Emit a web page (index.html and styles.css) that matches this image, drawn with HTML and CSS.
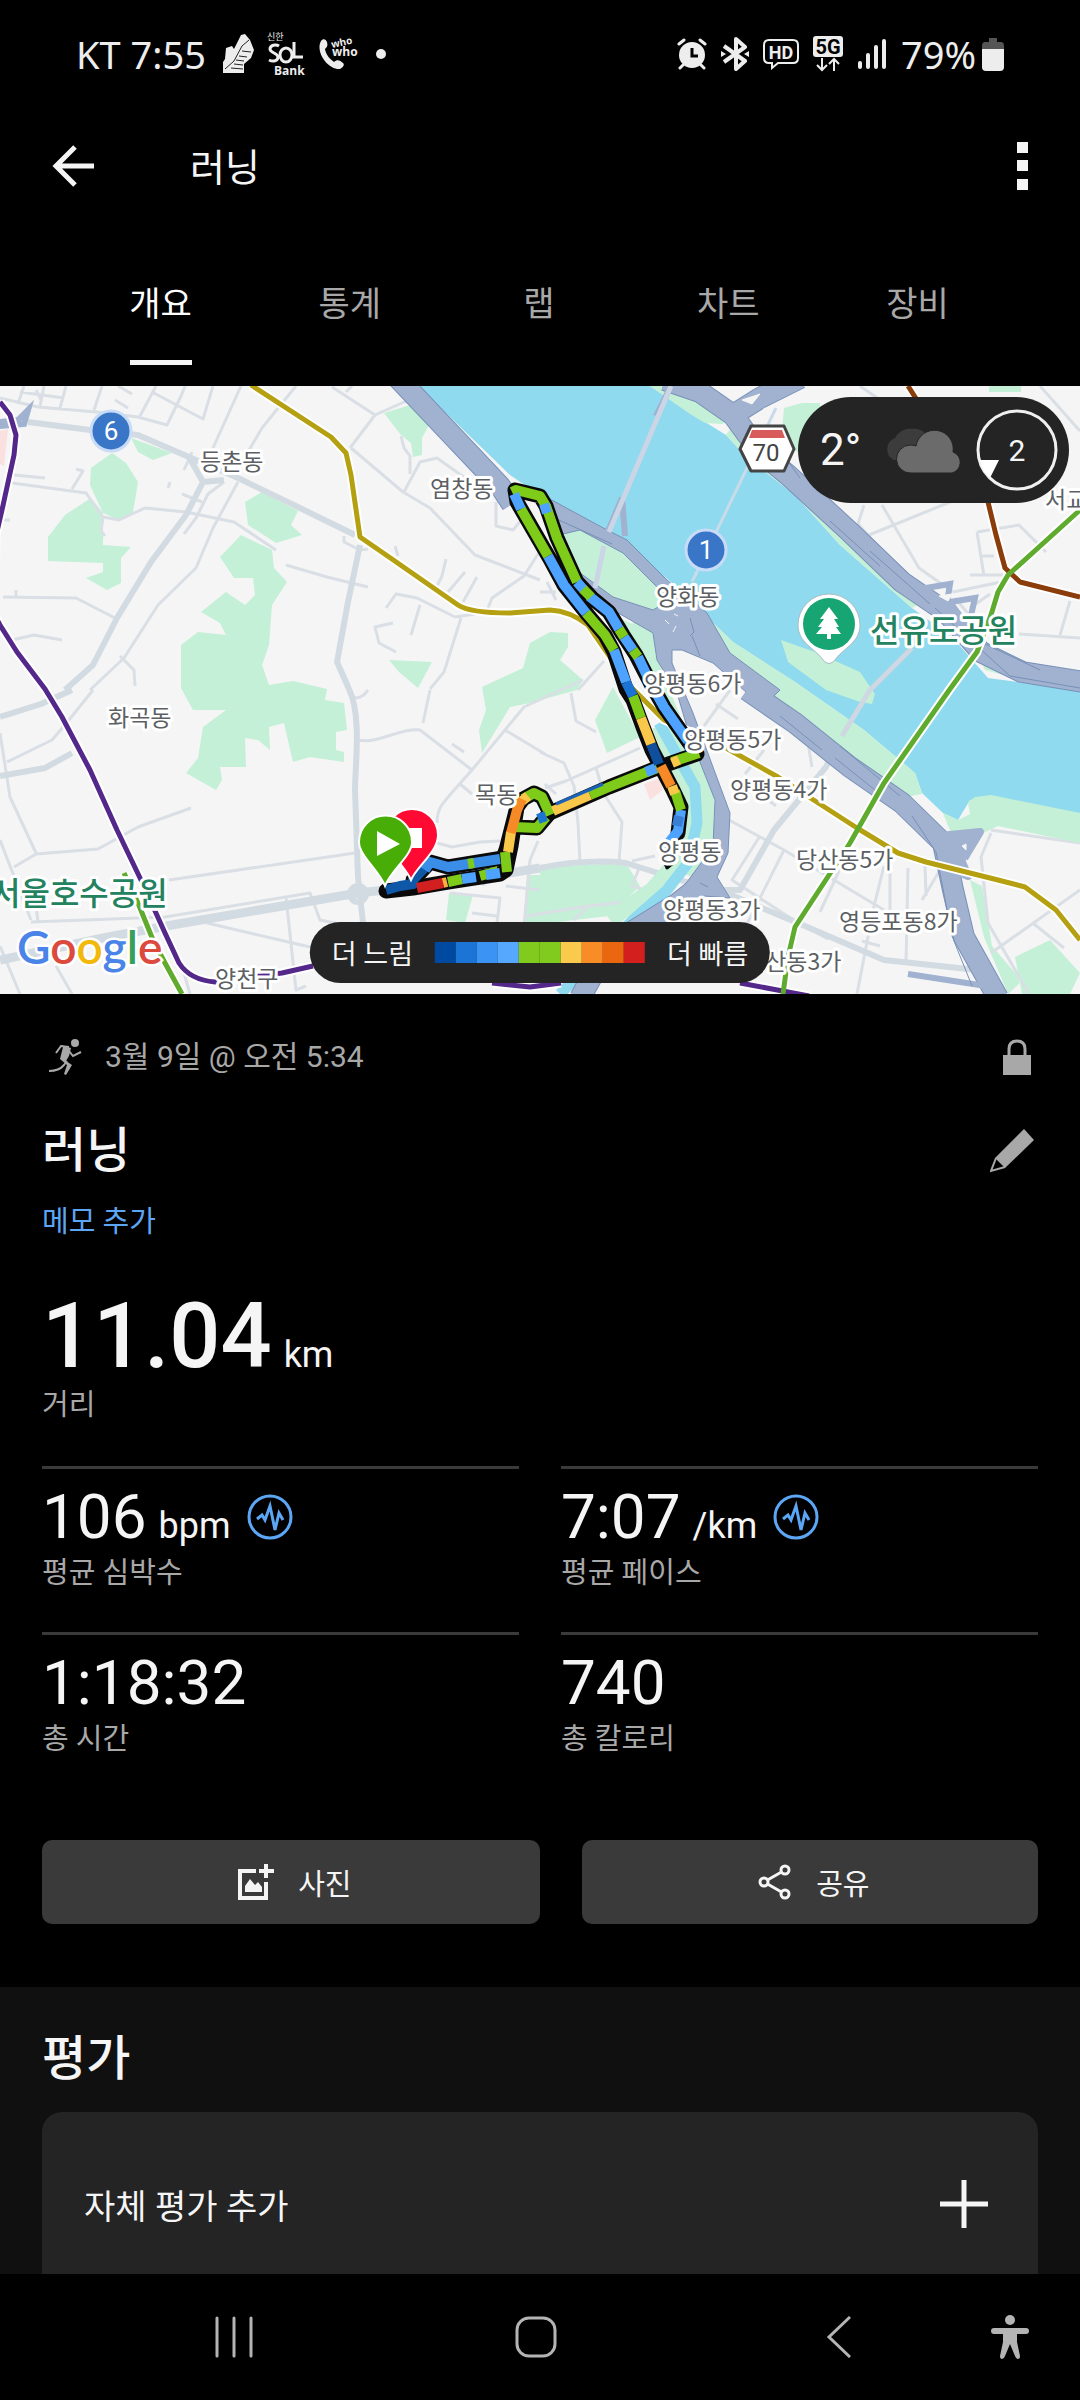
FILE: index.html
```html
<!DOCTYPE html>
<html lang="ko">
<head>
    <meta charset="UTF-8">
    <meta name="viewport" content="width=device-width, initial-scale=1.0">
    <title>러닝</title>
    <link rel="stylesheet" href="styles.css">
</head>
<body>

<!-- Status bar -->
<div class="status-bar">
    <div class="status-left">
        <span class="status-text">KT 7:55</span>
        <svg width="32" height="42" viewBox="0 0 32 42"><path d="M1 40V29l2-3 1-11 6-2 2 3 7-14 4-1 5 6 4 10-3 8-7 6v9z" fill="#ededed"/><path d="M3 36l9-8 8-15 7-6M17 23l8 1M14 27l8 1M12 31l9 1M9 35l12 1M20 18l9 1" stroke="#222" stroke-width="1" fill="none"/></svg>
        <svg width="40" height="50" viewBox="0 0 40 50">
            <text x="1" y="11" class="ico-kr">신한</text>
            <path d="M13 17c-3-2-9-1-9 3s8 4 8 8-5 5-9 3M28 13v15h9" stroke="#ededed" stroke-width="3" fill="none"/>
            <ellipse cx="20" cy="26" rx="6" ry="7" stroke="#ededed" stroke-width="3" fill="none"/>
            <text x="8" y="46" class="ico-bank">Bank</text>
        </svg>
        <svg width="42" height="44" viewBox="0 0 42 44">
            <path d="M3 9c2-3 5-2 6 1 1 4 0 5-2 7 1 6 5 10 9 13 3-3 6-2 9 1 2 2 0 4-3 6C10 38-3 20 3 9z" fill="#ededed"/>
            <text x="14" y="16" class="ico-who" transform="rotate(-12 14 16)">who</text>
            <text x="14" y="24" class="ico-who big">who</text>
        </svg>
        <span class="dot"></span>
    </div>
    <div class="status-right">
        <svg width="30" height="32" viewBox="0 0 30 32"><circle cx="15" cy="17" r="13" fill="#ededed"/><path d="M2 6l5-4M28 6l-5-4M6 27l-3 3M24 27l3 3" stroke="#ededed" stroke-width="3" stroke-linecap="round"/><path d="M15 10v8h6" stroke="#000" stroke-width="3" fill="none"/></svg>
        <svg width="28" height="34" viewBox="0 0 28 34"><path d="M3 9l21 15-9 8V2l9 8L3 25" stroke="#ededed" stroke-width="4" stroke-linejoin="round" fill="none"/><path d="M0 14l5 3-5 3zM28 14l-5 3 5 3z" fill="#ededed"/></svg>
        <svg width="36" height="32" viewBox="0 0 36 32"><path d="M6 2h24q5 0 5 5v13q0 5-5 5H15l-6 5v-5H6q-5 0-5-5V7q0-5 5-5z" stroke="#ededed" stroke-width="2" fill="none"/><text x="18" y="21" class="ico-hd">HD</text></svg>
        <svg width="30" height="36" viewBox="0 0 30 36"><rect width="30" height="21" rx="3" fill="#ededed"/><text x="15" y="18" class="ico-5g">5G</text><path d="M9 22v12M4 29l5 5 5-5M21 35V23M16 28l5-5 5 5" stroke="#ededed" stroke-width="2" fill="none"/></svg>
        <svg width="30" height="32" viewBox="0 0 30 32"><path d="M3 25v4M11 17v12M19 9v20M27 3v26" stroke="#ededed" stroke-width="4" stroke-linecap="round"/></svg>
        <span class="status-text">79%</span>
        <svg width="22" height="33" viewBox="0 0 22 33"><path d="M7 0h8v4h4q3 0 3 4v4H0V8q0-4 3-4h4z" fill="#555"/><path d="M0 11h22v18q0 4-4 4H4q-4 0-4-4z" fill="#ededed"/></svg>
    </div>
</div>

<!-- App bar -->
<header class="app-bar">
    <button class="icon-btn" aria-label="뒤로">
        <svg width="42" height="42" viewBox="0 0 42 42"><path d="M42 21H4M23 2L4 21l19 19" stroke="#f5f5f5" stroke-width="5" fill="none"/></svg>
    </button>
    <h1>러닝</h1>
    <button class="icon-btn menu" aria-label="더보기">
        <svg width="11" height="48" viewBox="0 0 11 48"><path d="M0 0h11v11H0zM0 18h11v11H0zM0 37h11v11H0z" fill="#f5f5f5"/></svg>
    </button>
</header>

<nav class="tabs">
    <a href="#" class="tab active">개요</a>
    <a href="#" class="tab">통계</a>
    <a href="#" class="tab">랩</a>
    <a href="#" class="tab">차트</a>
    <a href="#" class="tab">장비</a>
</nav>

<main class="content">

    <!-- Route map -->
    <section class="map">
        <svg class="map-svg" viewBox="0 0 1080 608">
            <rect width="1080" height="608" fill="#f5f5f5"/>

            <!-- Parks -->
            <g class="park">
                <path d="M112 67L91 82 90 99 103 127 119 134 133 126 138 96 126 77z"/>
                <path d="M91 112L65 129 48 151V175L103 177V186L86 192 107 204 121 197V172L131 161 103 159V127z"/>
                <path d="M131 52L172 67 153 74 138 66z"/>
                <path d="M262 106L298 125 291 139 302 149 276 157 248 139 245 116z"/>
                <path d="M241 149L272 164 274 182 287 196 272 219 269 259 262 279 269 299 293 295 327 303 325 314 344 317 347 344 336 346 336 364 344 366V376L310 371 293 376 284 337 269 341 270 364 258 354 245 352 246 381 220 381 222 394 216 404 186 387 198 372 203 341 226 324 193 324 181 302V259L198 246 226 249 220 237 201 226 226 206 245 219 255 209 253 192 234 192 220 171z"/>
                <path d="M389 274L432 276 418 302 399 286zM384 27L417 17 430 37 422 52 422 69 413 71 411 57 401 49z"/>
                <path d="M530 257L550 246 568 247V261L560 274 583 294 577 304 530 317 510 321 482 367 479 344 486 324 482 301 523 282z"/>
                <path d="M449 507L473 509 465 537 446 534zM527 489H550V545H523z"/>
                <path d="M613 301L595 334 607 367 640 351z"/>
                <path d="M540 481L626 477 640 500 609 530 540 538z"/>
                <path d="M802 17L784 22 781 56 820 80V17z"/>
                <path d="M970 494L984 551 1008 608 1022 595 992 560 982 500zM1015 571L1050 554 1080 587 1070 608 1022 608zM989 0h32v6h-32z"/>
            </g>
            <path d="M644 398L661 392 663 404 650 414zM0 45L8 43 4 80 0 78z" fill="#fbe0e0"/>

            <!-- Local roads -->
            <g class="road">
                <path d="M0 12L38 21 96 26 138 31 167 39 181 10 186-2M18 18L24 0M40 20L44 0M60 22L66 0M94 24L102 0M20 6L64 12M140 30L156 0M152 6L203 33 213 0M115 14L128 22M118 0L132 8M36 4L42 16"/>
                <path d="M241 0L213 62M296 0L262 42 248 66M238 96L213 142 196 182 158 219 124 272 90 304M12 97L86 107 103 131 119 134 145 122 186 126 234 136 276 164M103 131L101 145 105 150"/>
                <path d="M3 211L76 212 115 232M16 204V212M3 134H10M12 254L34 249 62 254M14 89L45 92M76 83L83 85 72 103M182 108L202 116M170 96L168 102M224 96L208 108 196 132 184 148M120 270L134 284 135 300M184 84L192 66"/>
                <path d="M351 62L403 106 430 122 475 169 540 194M332 1L375 29 413 12M346 6L352 0M375 29L350 62M286 179L327 191 368 201M386 222L396 208 417 212 455 231 475 228M461 232L444 286 430 303M420 219L411 249M465 186L448 206M477 191L463 216M446 173L442 190 437 200M393 237L375 241 379 257 396 266M496 116L496 140 513 144 523 132M404 106L420 76 437 72 489 109M401 50L404 62 410 70 410 88M344 150V156L360 164 368 163M395 160L398 170M540 165L524 190 492 212 488 222"/>
                <path d="M93 304L69 334 52 354 7 376M0 347L10 411 36 467M14 481L36 468 98 463 138 441 191 422M0 454L31 534M31 536L165 531 310 507 320 534 344 539M36 520L38 536M169 494L355 467M207 537L310 561M286 511L296 604 306 600M0 560L20 608M56 580L72 608M182 580L190 608"/>
                <path d="M358 354C380 358 398 342 420 344L472 384M583 294L524 321 505 344 472 384C440 420 437 421 437 437M423 337L430 304M354 312C364 312 366 306 368 304M452 358L464 366M460 398L472 408M505 344L545 368M437 457L452 461 480 456 500 455M506 500L540 504M450 507L500 512 497 537M472 527L497 530M458 540L456 585M480 470L484 500"/>
                <path d="M540 366L564 377 574 400 578 437 580 476M545 402L566 395 640 362M571 307L576 335 596 346M596 382L604 408 622 436 619 476M545 398L556 408M632 475L655 470M640 480L632 500 650 506M530 474L524 540M526 530L588 520 626 516M574 534L588 520M538 455L530 474"/>
                <path d="M729 434L784 464 884 524M760 450L732 494 798 537 828 553M784 464L740 552M716 318L738 333M704 340L730 304M745 388L764 364M812 381L806 345M768 414L776 420M884 480L874 520 857 608M908 482L906 576M890 478V540M925 480L926 510M940 484L922 514M846 470L820 526M1080 504L991 567M991 447L981 471 988 537 1029 608M991 444L1080 457M1034 538L1064 562M862 555L880 560"/>
                <path d="M864 119L858 138 909 195M869 149L960 112M882 119L919 182 953 206M977 146L1019 139 1046 166M977 146L984 190M970 189H1004M980 170H994M953 206L1001 196M1070 215L1060 249M1019 248L1080 252M955 212L975 236M860 0L880 14M1040 0L1080 45M970 222L990 208M547 196L556 214M540 206H556M578 304L604 275"/>
            </g>
            <g class="road main">
                <path d="M28 36L90 44 138 49 189 71 238 92 300 122 355 149M203 96L186 129 151 176 117 232 93 279 65 304M189 71L203 96 224 94M360 159L348 216 337 276 349 303C362 330 355 380 355 404L358 491 363 537M0 331L41 318 72 304M0 390L45 382 72 367"/>
                <path class="wide" d="M0 574L103 552 172 539 358 507 448 497 540 482"/>
                <path d="M540 482C570 476 600 474 626 477L712 504H740L774 444 826 381 864 304M712 501L798 537 884 574 977 584"/>
                <circle cx="358" cy="508" r="8"/>
            </g>

            <!-- River -->
            <path class="water" d="M418 0L510 89 554 119 605 146 626 159 671 196 705 229 733 256 795 296 864 344 915 387 922 407 943 427 958 434 970 414 988 421 1080 427V304L988 292 953 252 912 222 840 159 795 109 747 72 726 49 705 36 678 19 650 0z"/>
            <path class="stream-bank" d="M640 235L655 290 680 350 706 401 706 447 690 490"/>
            <path class="stream-bank" d="M660 340L682 401 684 437 676 477 652 504 610 534"/>
            <path class="stream" d="M659 337L678 371 695 401 697 437 688 477 667 504 633 534 560 608"/>
            <g class="park">
                <path d="M650 0H680L735 32 722 38 705 37 690 28zM610 228L653 247 656 275 640 285z"/>
                <path d="M781 254L815 266 860 286 875 308 872 318 860 316 826 304 788 276z"/>
                <path d="M705 229L733 256 795 296 864 344 915 387 922 408 900 412 840 372 770 330 720 270z"/>
                <path d="M726 49L747 72 795 109 840 159 912 222 925 215 850 140 765 60 735 36z"/>
                <path d="M943 427L958 434 970 428 968 416 975 411 991 409 1080 427V457L998 440 977 450 953 452z"/>
                <path d="M975 262L1005 284 1000 288 985 284z"/>
            </g>

            <!-- Expressways -->
            <g class="expressway-edge">
                <path d="M396-10L500 100 512 118M747 304L795 337 850 381 902 417 943 457 953 504 964 551 998 612"/>
                <path d="M700 500L678 517 609 560 580 612"/>
                <path d="M665-6L700 6 733 29 760 66 788 89 850 146 902 196 946 226 981 266 1022 286 1084 296M733 29L760 12 800-8"/>
            </g>
            <path class="junction" d="M548 112L607 144 627 154 667 194 707 227 730 267 780 304 763 321 713 277 682 264 672 264 672 277 693 327 730 427 728 467 717 491 730 512 678 508 713 461 715 414 690 351 677 307 657 274 653 247 613 224 560 170z"/>
            <g class="expressway">
                <path d="M396-10L500 100 512 118M747 304L795 337 850 381 902 417 943 457 953 504 964 551 998 612"/>
                <path d="M700 500L678 517 609 560 580 612"/>
                <path d="M665-6L700 6 733 29 760 66 788 89 850 146 902 196 946 226 981 266 1022 286 1084 296M733 29L760 12 800-8"/>
                <path d="M940 450L980 446 962 476 968 490 945 480z"/>
            </g>
            <path d="M563 148L580 144 623 167 657 201 670 214 653 224 613 211 598 200 580 187z" fill="#c3f0d6" stroke="#7890b8"/>
            <path class="expressway-thin" d="M0 36L18 34 28 24 24 38 0 40zM606 150L622 112 625 150M920 203L950 198 946 222M908 588L986 600M656 30L671 0M960 230L950 216 975 212 970 234"/>
            <path class="expressway-gap" d="M939 210L952 208 948 215zM742 14L760 8 752 18zM764 22l4 2-3 4zM763 30v6M773 30v6M674 228l4 2M665 234l4 4M676 240l-3 6M962 460l4-2v6zM966 474l5 2-3 2z"/>
            <path class="expressway-line" d="M550 130L612 158M690 232L694 246 690 250M700 270L692 250M780 330L822 364M835 372L880 408M840 360L900 410M912 430L936 466 952 550 972 600M870 165L930 218M830 135L880 180M935 222L1010 290 1080 302M770 50L800 92M985 258L1040 284M700 497l8 4"/>

            <!-- Bridges -->
            <path d="M671 0L609 146M604 160L595 202" stroke="#cbd5e6" stroke-width="5" fill="none"/>
            <path d="M776 22L692 196" stroke="#c9dbe8" stroke-width="3" fill="none"/>
            <path d="M912 262L870 304 842 350" stroke="#cfd8e2" stroke-width="5" fill="none"/>

            <!-- Subway lines -->
            <g class="line-halo">
                <path d="M0 16L10 29 16 49 14 69 2 124-4 150-5 230 0 239 17 266 45 303 62 331 90 384 117 444 141 494 165 547 179 577Q190 594 215 596L282 587 313 580M492 597L530 601 561 597M740 597L809 610"/>
                <path d="M251-1L331 51 346 67 351 89 360 151 389 171 458 219Q470 227 510 227L550 224Q570 225 588 239L630 300 664 334 726 362 778 391 857 442 898 467 926 476 998 494 1025 501 1056 524 1080 554"/>
                <path d="M1080 124L1008 189 998 206 991 229 977 266 950 303 884 397 850 457 795 541 788 571 783 608M124 487L138 517 153 554 165 577 182 608"/>
                <path d="M908 0L940 50 988 116 996 149 1005 182 1020 196 1080 211"/>
            </g>
            <g class="line">
                <path stroke="#54278a" d="M0 16L10 29 16 49 14 69 2 124-4 150-5 230 0 239 17 266 45 303 62 331 90 384 117 444 141 494 165 547 179 577Q190 594 215 596L282 587 313 580M492 597L530 601 561 597M740 597L809 610"/>
                <path stroke="#b5a011" d="M251-1L331 51 346 67 351 89 360 151 389 171 458 219Q470 227 510 227L550 224Q570 225 588 239L630 300 664 334 726 362 778 391 857 442 898 467 926 476 998 494 1025 501 1056 524 1080 554"/>
                <path stroke="#8a3c0a" d="M908 0L940 50 988 116 996 149 1005 182 1020 196 1080 211"/>
                <path stroke="#5fab2e" d="M1080 124L1008 189 998 206 991 229 977 266 950 303 884 397 850 457 795 541 788 571 783 608M124 487L138 517 153 554 165 577 182 608"/>
            </g>

            <!-- Run route coloured by pace -->
            <g class="route-edge">
                <path d="M678 447L681 421 673 404 661 381 652 364 643 341 633 314 626 303 614 266 605 249 588 229 564 199 550 173 517 116 515 104 540 110 546 120 557 152 577 196 592 212 609 226 623 249 636 269 650 296 664 321 678 341 690 358 697 368 674 376 657 382 609 401 550 427 542 411 534 407 523 413 517 421 506 464 503 472 448 481 430 476 413 494"/>
                <path d="M548 429L537 442 517 441M517 421L511 460 506 484 500 488 448 496 413 502 386 505"/>
                <path class="fine" d="M678 447L665 462 663 473 667 482 673 477"/>
            </g>
            <g class="route">
                <path stroke="#0f58a8" d="M386 504L400 500 413 498 413 494 430 476"/>
                <path stroke="#3a8ee8" d="M425 484L430 476 448 481 500 473"/>
                <path stroke="#7ecb1a" d="M468 478L474 477M498 485L480 490M448 496L462 493M505 466L507 486"/>
                <path stroke="#4da3ff" d="M462 493L476 491M486 489L500 487"/>
                <path stroke="#d22020" d="M417 502L443 497"/>
                <path stroke="#fbb040" d="M443 497L447 496"/>
                <path stroke="#7ecb1a" d="M523 413L534 407 542 411 550 429M546 431L537 442 514 441"/>
                <path stroke="#1c74d2" d="M538 433L546 430"/>
                <path stroke="#f9c74a" d="M511 446L508 466M522 415L528 410"/>
                <path stroke="#f68a26" d="M522 413L517 424 511 447"/>
                <path stroke="#f9c74a" d="M553 425L590 409"/>
                <path stroke="#7ecb1a" d="M590 409L609 401 657 382M672 376L699 367"/>
                <path class="fine" stroke="#1c63b8" d="M556 418L603 398"/>
                <path stroke="#4da3ff" d="M646 386L656 382M663 464L678 445 681 424"/>
                <path stroke="#3a7fd6" d="M677 440L679 430"/>
                <path stroke="#7ecb1a" d="M681 424L675 405"/>
                <path stroke="#f9c74a" d="M675 408L672 400M672 377L679 374"/>
                <path stroke="#f68a26" d="M671 400L661 380"/>
                <path stroke="#0f4f9e" d="M659 378L651 358"/>
                <path stroke="#f9c74a" d="M651 358L641 332"/>
                <path stroke="#7ecb1a" d="M641 332L633 310"/>
                <path stroke="#1c74d2" d="M633 310L626 296"/>
                <path stroke="#4da3ff" d="M626 296L614 264"/>
                <path stroke="#7ecb1a" d="M614 264L605 249 586 227"/>
                <path stroke="#4da3ff" d="M586 227L564 199 548 170"/>
                <path stroke="#7ecb1a" d="M548 170L521 123M512 106L516 104 540 110 546 120 557 152 577 196"/>
                <path stroke="#4da3ff" d="M521 123L514 108M544 118L547 127M577 196L584 204M589 210L609 226 619 243M624 251L633 264M638 271L650 296 664 321 678 341 688 355"/>
                <path stroke="#7ecb1a" d="M583 203L591 211M619 243L624 251M633 264L638 271"/>
            </g>

            <!-- Start and finish markers -->
            <path d="M411 494C405 480 386 466 386 449A26 26 0 0 1 438 449C438 466 417 480 411 494z" fill="#ff0a32" stroke="#fff" stroke-width="2"/>
            <path d="M403 442h19v20h-19z" fill="#fff"/>
            <path d="M385 500C379 484 359 470 359 456A26 26 0 0 1 412 456C412 470 391 484 385 500z" fill="#48ad06" stroke="#fff" stroke-width="2"/>
            <path d="M377 445v25l23-12z" fill="#fff"/>

            <!-- Route shields -->
            <g class="shield">
                <circle cx="111" cy="45" r="20"/>
                <circle cx="706" cy="164" r="20"/>
                <text x="111" y="54">6</text>
                <text x="706" y="173">1</text>
            </g>
            <path d="M751 40h33l10 23-10 22h-33l-11-22z" fill="#fff" stroke="#444" stroke-width="3" stroke-linejoin="round"/>
            <path d="M752 44h30l3 8h-36z" fill="#d95c5c"/>
            <text x="766" y="75" class="shield-70">70</text>

            <!-- Park pin -->
            <path d="M829 208a31 31 0 0 1 31 31c0 18-18 24-25 35q-6 7-12 0c-7-11-25-17-25-35a31 31 0 0 1 31-31z" fill="#fff" stroke="#a9bcc2" stroke-width="1"/>
            <circle cx="829" cy="238" r="26" fill="#17a673"/>
            <path d="M829 221l9 12h-4l5 8h-3l5 7h-10v5h-4v-5h-11l6-7h-4l6-8h-4z" fill="#fff"/>

            <!-- Place names -->
            <g class="place">
                <text x="200" y="84">등촌동</text>
                <text x="430" y="111">염창동</text>
                <text x="1045" y="122">서교</text>
                <text x="656" y="219">양화동</text>
                <text x="644" y="306">양평동6가</text>
                <text x="684" y="362">양평동5가</text>
                <text x="730" y="412">양평동4가</text>
                <text x="658" y="474">양평동</text>
                <text x="796" y="482">당산동5가</text>
                <text x="663" y="532">양평동3가</text>
                <text x="839" y="544">영등포동8가</text>
                <text x="744" y="584">당산동3가</text>
                <text x="108" y="340">화곡동</text>
                <text x="475" y="417">목동</text>
                <text x="215" y="601">양천구</text>
            </g>
            <g class="place park-name">
                <text x="870" y="256">선유도공원</text>
                <text x="-9" y="519">서울호수공원</text>
            </g>
            <text x="17" y="578" class="google"><tspan fill="#4a84e8">G</tspan><tspan fill="#dc4a3d">o</tspan><tspan fill="#f2b90c">o</tspan><tspan fill="#4a84e8">g</tspan><tspan fill="#36a05a">l</tspan><tspan fill="#dc4a3d">e</tspan></text>
        </svg>

        <div class="weather">
            <span class="temp">2°</span>
            <svg width="82" height="48" viewBox="0 0 82 48"><path d="M12 34A12 12 0 0 1 13 12a19 17 0 0 1 34 0v22z" fill="#3c3c3c"/><path d="M29 47a13 13 0 0 1-1-28q3 0 6 1a18 18 0 0 1 37 6A11 11 0 0 1 70 47z" fill="#6b6b6b" stroke="#242424"/></svg>
            <div class="wind">
                <svg width="82" height="82" viewBox="0 0 82 82"><circle cx="41" cy="41" r="39" fill="none" stroke="#f0f0f0" stroke-width="3"/><path d="M4 51h19l-9 18Q6 62 4 51z" fill="#fff"/></svg>
                <span>2</span>
            </div>
        </div>

        <div class="legend">
            <span>더 느림</span>
            <div class="scale">
                <i class="c1"></i><i class="c2"></i><i class="c3"></i><i class="c4"></i><i class="c5"></i><i class="c5"></i><i class="c6"></i><i class="c7"></i><i class="c8"></i><i class="c9"></i>
            </div>
            <span>더 빠름</span>
        </div>
    </section>

    <!-- Activity summary -->
    <section class="summary">
        <div class="row date-row">
            <svg width="34" height="36" viewBox="0 0 34 36"><circle cx="27" cy="4" r="4" fill="#a8a8a8"/><path d="M8 14l5-7 8 1M19 22l-3 4q-5 6-15 6M21 12l4 5 8-4" stroke="#a8a8a8" stroke-width="2" fill="none"/><path d="M13 6l10 3-2 8-3 5 6 4-6 10-2-1 3-9-7-6 3-12z" fill="#a8a8a8"/></svg>
            <span>3월 9일 @ 오전 5:34</span>
            <svg class="end" width="28" height="36" viewBox="0 0 28 36"><path d="M0 16h28v20H0z" fill="#a8a8a8"/><path d="M6 17v-7q0-8 8-8t8 8v7" stroke="#a8a8a8" stroke-width="3" fill="none"/></svg>
        </div>
        <div class="row title-row">
            <h2>러닝</h2>
            <button class="icon-btn end" aria-label="편집">
                <svg width="44" height="44" viewBox="0 0 44 44"><path d="M34 0l10 11-29 28-10-10z" fill="#a8a8a8"/><path d="M6 29L1 42l14-4" stroke="#a8a8a8" stroke-width="2" fill="none"/></svg>
            </button>
        </div>
        <a href="#" class="memo">메모 추가</a>

        <div class="stat distance">
            <p class="value">11.04 <small>km</small></p>
            <p class="label">거리</p>
        </div>

        <div class="stats">
            <div class="stat">
                <p class="value">106 <small>bpm</small>
                    <svg width="46" height="46" viewBox="0 0 46 46"><circle cx="23" cy="23" r="21"/><path d="M10 25l5-4 3 5 5-14 5 24 4-17 4 7"/></svg>
                </p>
                <p class="label">평균 심박수</p>
            </div>
            <div class="stat">
                <p class="value">7:07 <small>/km</small>
                    <svg width="46" height="46" viewBox="0 0 46 46"><circle cx="23" cy="23" r="21"/><path d="M10 25l5-4 3 5 5-14 5 24 4-17 4 7"/></svg>
                </p>
                <p class="label">평균 페이스</p>
            </div>
            <div class="stat">
                <p class="value">1:18:32</p>
                <p class="label">총 시간</p>
            </div>
            <div class="stat">
                <p class="value">740</p>
                <p class="label">총 칼로리</p>
            </div>
        </div>

        <div class="actions">
            <button class="action photo">
                <svg width="36" height="36" viewBox="0 0 36 36"><path d="M18 7H2v27h26V18" stroke="#f5f5f5" stroke-width="4" fill="none"/><path d="M28 0v14M21 7h15" stroke="#f5f5f5" stroke-width="4"/><path d="M7 28v-6l5-7 5 6 3-3 4 5v5z" fill="#f5f5f5"/></svg>
                사진
            </button>
            <button class="action share">
                <svg width="34" height="36" viewBox="0 0 34 36"><path d="M6 18L27 6M6 18l21 12" stroke="#f5f5f5" stroke-width="3"/><g fill="#3a3a3a" stroke="#f5f5f5" stroke-width="3"><circle cx="6" cy="18" r="4"/><circle cx="27" cy="6" r="4"/><circle cx="27" cy="30" r="4"/></g></svg>
                공유
            </button>
        </div>
    </section>

    <!-- Rating -->
    <section class="rating">
        <h2>평가</h2>
        <button class="rating-card">
            자체 평가 추가
            <svg width="48" height="48" viewBox="0 0 48 48"><path d="M24 0v48M0 24h48" stroke="#f5f5f5" stroke-width="5"/></svg>
        </button>
    </section>
</main>

<!-- System navigation -->
<nav class="system-nav">
    <button class="icon-btn" aria-label="최근 앱"><svg width="40" height="42" viewBox="0 0 40 42"><path d="M3 2v38M20 2v38M37 2v38" stroke="#b4b4b4" stroke-width="3" stroke-linecap="round"/></svg></button>
    <button class="icon-btn" aria-label="홈"><svg width="42" height="42" viewBox="0 0 42 42"><rect x="2" y="2" width="38" height="38" rx="12" fill="none" stroke="#b4b4b4" stroke-width="3"/></svg></button>
    <button class="icon-btn" aria-label="이전"><svg width="25" height="42" viewBox="0 0 25 42"><path d="M24 1L3 21l21 20" stroke="#b4b4b4" stroke-width="3" fill="none"/></svg></button>
    <button class="icon-btn accessibility" aria-label="접근성"><svg width="38" height="44" viewBox="0 0 38 44"><circle cx="19" cy="5" r="5" fill="#b4b4b4"/><path d="M3 13h32q3 0 3 3t-3 3h-9v8l3 14q0 3-2 3t-3-3l-5-12-5 12q-1 3-3 3t-2-3l3-14v-8H3q-3 0-3-3t3-3z" fill="#b4b4b4"/></svg></button>
</nav>

</body>
</html>
```

FILE: styles.css
```css
/* General */
* {
    box-sizing: border-box;
}

body {
    margin: 0;
    height: 100vh;
    display: flex;
    flex-direction: column;
    background: #000;
    color: #f5f5f5;
    font-family: Roboto, 'Noto Sans CJK KR', sans-serif;
    overflow: hidden;
}

h1, h2, p {
    margin: 0;
    font-weight: 400;
}

svg {
    display: block;
    flex-shrink: 0;
}

button {
    font: inherit;
    color: inherit;
    border: none;
    cursor: pointer;
}

a {
    text-decoration: none;
}

.icon-btn {
    background: none;
    padding: 0;
}

/* Status bar */
.status-bar {
    display: flex;
    justify-content: space-between;
    align-items: center;
    height: 110px;
    padding: 0 76px 2px;
    color: #ededed;
    flex-shrink: 0;
}

.status-left {
    display: flex;
    align-items: center;
    gap: 12px;
}

.status-right {
    display: flex;
    align-items: center;
    gap: 14px;
}

.status-text {
    font-family: 'Noto Sans', sans-serif;
    font-size: 38px;
    line-height: 48px;
    margin-right: 4px;
}

.status-right .status-text {
    margin: 0 -8px 0 0;
}

.dot {
    width: 10px;
    height: 10px;
    border-radius: 50%;
    background: #ededed;
    margin-left: 4px;
}

.ico-kr {
    font: 9px 'Noto Sans CJK KR', sans-serif;
    fill: #ededed;
}

.ico-bank {
    font: bold 12px 'Open Sans', sans-serif;
    fill: #ededed;
}

.ico-who {
    font: bold 10px 'Open Sans', sans-serif;
    fill: #ededed;
}

.ico-who.big {
    font-size: 12px;
}

.ico-hd {
    font: bold 18px Roboto, sans-serif;
    fill: #ededed;
    text-anchor: middle;
}

.ico-5g {
    font: bold 20px Roboto, sans-serif;
    fill: #000;
    text-anchor: middle;
}

/* App bar */
.app-bar {
    display: flex;
    align-items: center;
    height: 112px;
    padding: 0 52px;
    flex-shrink: 0;
}

.app-bar h1 {
    margin-left: 96px;
    padding-top: 3px;
    font-size: 38px;
    line-height: 48px;
}

.app-bar .menu {
    margin-left: auto;
}

/* Tabs */
.tabs {
    display: flex;
    height: 164px;
    padding: 0 68px 0 66px;
    flex-shrink: 0;
}

.tab {
    flex: 1;
    display: flex;
    justify-content: center;
    align-self: flex-end;
    padding-bottom: 62px;
    font-size: 34px;
    line-height: 40px;
    color: #a8a8a8;
}

.tab.active {
    color: #fff;
    background: linear-gradient(#f5f5f5, #f5f5f5) no-repeat center bottom 21px / 62px 5px;
}

/* Content */
.content {
    flex: 1;
    min-height: 0;
    overflow-y: auto;
    scrollbar-width: none;
}

/* Map */
.map {
    position: relative;
    overflow: hidden;
}

.map-svg {
    width: 100%;
    height: auto;
}

.park {
    fill: #c3f0d6;
}

.road {
    fill: none;
    stroke: #d9dfe5;
    stroke-width: 3;
    stroke-linejoin: round;
}

.road.main {
    stroke: #d3dbe2;
    stroke-width: 6;
}

.road .wide {
    stroke-width: 9;
}

.water {
    fill: #8fdaee;
}

.stream-bank {
    fill: none;
    stroke: #c3f0d6;
    stroke-width: 16;
}

.stream {
    fill: none;
    stroke: #8fdaee;
    stroke-width: 11;
}

.expressway-edge,
.expressway {
    fill: none;
    stroke: #7890b8;
    stroke-width: 22;
    stroke-linejoin: round;
}

.expressway {
    stroke: #a0b2d0;
    stroke-width: 20;
}

.expressway path:last-child {
    fill: #a0b2d0;
    stroke-width: 8;
}

.junction {
    fill: #a0b2d0;
    stroke: #7890b8;
    stroke-width: 1;
}

.expressway-thin {
    fill: none;
    stroke: #a0b2d0;
    stroke-width: 6;
}

.expressway-gap {
    fill: #f5f5f5;
    stroke: #f5f5f5;
    stroke-width: 1;
}

.expressway-line {
    fill: none;
    stroke: #7890b8;
    stroke-width: 1;
}

.line-halo,
.line {
    fill: none;
    stroke: #fff;
    stroke-width: 9;
    stroke-linejoin: round;
}

.line {
    stroke-width: 5;
}

.route-edge,
.route {
    fill: none;
    stroke: #0a0a0a;
    stroke-width: 15;
    stroke-linejoin: round;
    stroke-linecap: round;
}

.route {
    stroke-width: 10;
    stroke-linecap: butt;
}

.route-edge .fine,
.route .fine {
    stroke-width: 3;
}

.shield {
    fill: #3a76c8;
    stroke: #c8dcf8;
    stroke-width: 3;
}

.shield text {
    font-size: 26px;
    fill: #fff;
    stroke: none;
    text-anchor: middle;
}

.shield-70 {
    font-size: 24px;
    fill: #444;
    text-anchor: middle;
}

.place {
    font-family: 'Noto Sans CJK KR', sans-serif;
    font-size: 23px;
    fill: #5c5f63;
    stroke: #fff;
    stroke-width: 6;
    stroke-linejoin: round;
    paint-order: stroke;
}

.park-name {
    font-size: 32px;
    font-weight: 500;
    fill: #23835f;
}

.google {
    font: 46px Lato, sans-serif;
    font-weight: 600;
    stroke: #fff;
    stroke-width: 5;
    paint-order: stroke;
}

/* Weather badge over the map */
.weather {
    position: absolute;
    top: 11px;
    right: 11px;
    display: flex;
    align-items: center;
    gap: 12px;
    height: 106px;
    padding: 0 11px 0 22px;
    border-radius: 53px;
    background: #242424;
}

.temp {
    font-size: 44px;
    width: 50px;
}

.wind {
    display: grid;
    place-items: center;
    font-size: 30px;
}

.wind > * {
    grid-area: 1 / 1;
}

/* Pace legend over the map */
.legend {
    position: absolute;
    bottom: 11px;
    left: 50%;
    transform: translateX(-50%);
    display: flex;
    align-items: center;
    gap: 22px;
    height: 61px;
    padding: 0 22px;
    border-radius: 31px;
    background: #242424;
    font-size: 27px;
    white-space: nowrap;
}

.scale {
    display: flex;
}

.scale i {
    width: 21px;
    height: 21px;
}

.c1 { background: #0049a0; }
.c2 { background: #1c74d6; }
.c3 { background: #3b94f4; }
.c4 { background: #55a8fd; }
.c5 { background: #81cb1f; }
.c6 { background: #f9ca4b; }
.c7 { background: #f88d28; }
.c8 { background: #eb670f; }
.c9 { background: #d3201f; }

/* Summary */
.summary {
    padding: 40px 42px 63px;
}

.row {
    display: flex;
    align-items: center;
}

.end {
    margin-left: auto;
}

.date-row {
    height: 46px;
    padding: 0 7px 0 6px;
    gap: 23px;
    font-size: 30px;
    line-height: 40px;
    color: #a8a8a8;
}

.title-row {
    height: 64px;
    margin-top: 39px;
    padding-right: 4px;
}

h2 {
    font-size: 48px;
    font-weight: 500;
    line-height: 64px;
}

.memo {
    display: block;
    margin-top: 19px;
    font-size: 29px;
    line-height: 40px;
    color: #5ca6f5;
}

.stat .value {
    display: flex;
    align-items: baseline;
    gap: 12px;
    height: 64px;
    font-size: 62px;
    line-height: 64px;
}

.stat small {
    font-size: 36px;
}

.stat svg {
    align-self: center;
    margin-left: 4px;
    fill: none;
    stroke: #5ca6f5;
    stroke-width: 3;
}

.stat .label {
    font-size: 29px;
    line-height: 40px;
    margin-top: 4px;
    color: #a8a8a8;
}

.stat.distance .value {
    height: 88px;
    font-size: 90px;
    font-weight: 500;
    line-height: 88px;
    margin-top: 51px;
}

.stat.distance small {
    font-weight: 400;
}

.stats {
    display: grid;
    grid-template-columns: 1fr 1fr;
    column-gap: 42px;
    margin-top: 41px;
}

.stats .stat {
    height: 166px;
    padding-top: 16px;
    border-top: 3px solid #3a3a3a;
}

/* Buttons */
.actions {
    display: flex;
    gap: 42px;
    margin-top: 42px;
}

.action {
    display: flex;
    justify-content: center;
    align-items: center;
    gap: 24px;
    height: 84px;
    padding: 0 0 0 8px;
    border-radius: 10px;
    background: #3a3a3a;
    font-size: 29px;
}

.photo {
    flex: 498;
}

.share {
    flex: 456;
}

/* Rating */
.rating {
    padding: 40px 42px 42px;
    background: #101010;
}

.rating-card {
    display: flex;
    justify-content: space-between;
    align-items: center;
    width: 100%;
    height: 184px;
    margin-top: 21px;
    padding: 0 50px 0 42px;
    border-radius: 20px;
    background: #242424;
    font-size: 34px;
}

/* System navigation */
.system-nav {
    position: relative;
    display: flex;
    align-items: center;
    height: 126px;
    padding: 0 90px 0 83px;
    flex-shrink: 0;
}

.system-nav .icon-btn {
    flex: 1;
    display: flex;
    justify-content: center;
}

.system-nav .accessibility {
    position: absolute;
    right: 51px;
}
```
